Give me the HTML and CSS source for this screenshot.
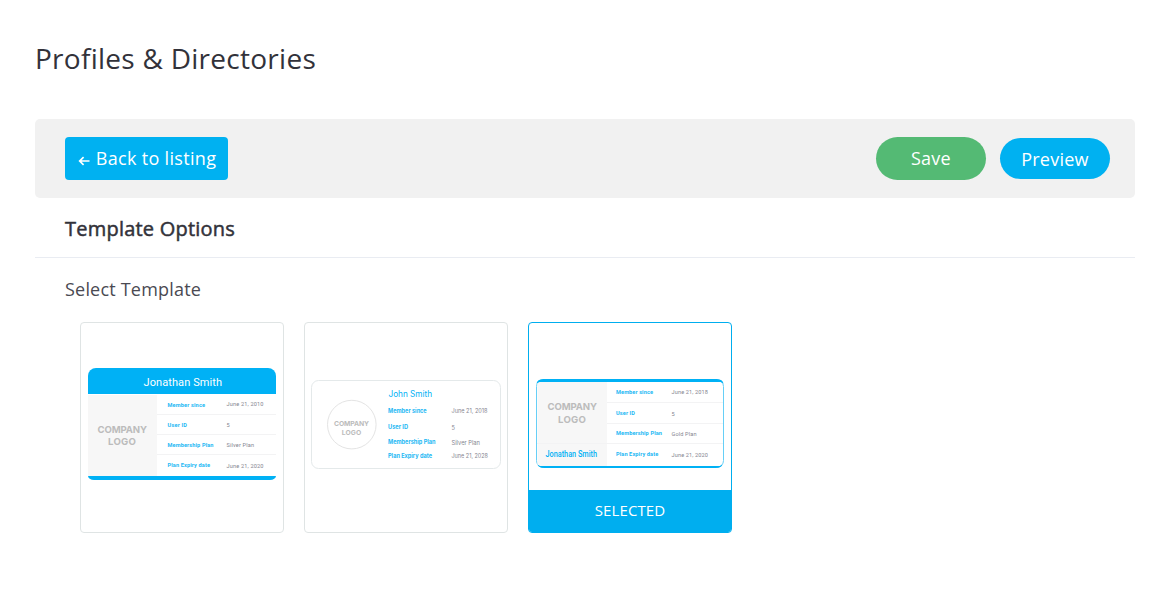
FILE: index.html
```html
<!DOCTYPE html>
<html lang="en">
<head>
<meta charset="utf-8">
<title>Profiles &amp; Directories</title>
<link rel="stylesheet" href="styles.css">
</head>
<body>
<main class="page">
  <h1 class="page-title">Profiles &amp; Directories</h1>
  <div class="toolbar">
    <a class="btn btn-back"><svg class="arrow" viewBox="0 0 12 10"><path d="M11.5 5H2M5.6 1.2L1.7 5l3.9 3.8"/></svg><span>Back to listing</span></a>
    <div class="actions">
      <button class="btn btn-save">Save</button>
      <button class="btn btn-preview">Preview</button>
    </div>
  </div>
  <h2 class="section-title">Template Options</h2>
  <p class="field-label">Select Template</p>
  <div class="templates">
    <div class="template">
      <svg class="art" viewBox="81 323 202 209">
        <path class="blue" d="M88 394V376a8 8 0 0 1 8-8H268a8 8 0 0 1 8 8V394z"/>
        <path class="panel" d="M88 395h69v81H88z"/>
        <path class="rule" d="M157 414.500H276M157 434.500H276M157 454.500H276"/>
        <path class="blue" d="M88 476H276a6 4 0 0 1-6 4H94a6 4 0 0 1-6-4z"/>
        <text class="name light" x="143.500" y="385.500" textLength="78.500">Jonathan Smith</text>
        <text class="logo" x="97.500" y="433" textLength="49.500">COMPANY</text>
        <text class="logo" x="108" y="445" textLength="28">LOGO</text>
        <g class="key">
          <text x="167.500" y="406.500" textLength="37.500">Member since</text>
          <text x="167.500" y="427" textLength="19.500">User ID</text>
          <text x="167.500" y="446.500" textLength="46">Membership Plan</text>
          <text x="167.500" y="467" textLength="42.500">Plan Expiry date</text>
        </g>
        <g class="value">
          <text x="226.500" y="406" textLength="37">June 21, 2010</text>
          <text x="226.500" y="427">5</text>
          <text x="226.500" y="447" textLength="27.500">Silver Plan</text>
          <text x="226.500" y="467.500" textLength="37">June 21, 2020</text>
        </g>
      </svg>
    </div>
    <div class="template">
      <svg class="art" viewBox="305 323 202 209">
        <rect class="outline" x="311.500" y="380.500" width="189" height="88" rx="7"/>
        <circle class="outline ring" cx="351.800" cy="424.600" r="24.300"/>
        <text class="logo small" x="334" y="426.200" textLength="35">COMPANY</text>
        <text class="logo small" x="341.800" y="434.800" textLength="19.500">LOGO</text>
        <text class="name round" x="388.500" y="397.300" textLength="43.500" lengthAdjust="spacingAndGlyphs">John Smith</text>
        <g class="key round">
          <text x="388" y="413" textLength="38.700" lengthAdjust="spacingAndGlyphs">Member since</text>
          <text x="388" y="429.200" textLength="20" lengthAdjust="spacingAndGlyphs">User ID</text>
          <text x="388" y="444.300" textLength="47.500" lengthAdjust="spacingAndGlyphs">Membership Plan</text>
          <text x="388" y="458.200" textLength="44" lengthAdjust="spacingAndGlyphs">Plan Expiry date</text>
        </g>
        <g class="value round">
          <text x="451.500" y="412.600" textLength="36" lengthAdjust="spacingAndGlyphs">June 21, 2018</text>
          <text x="451.500" y="430">5</text>
          <text x="451.500" y="445" textLength="28.500" lengthAdjust="spacingAndGlyphs">Silver Plan</text>
          <text x="451.500" y="458.200" textLength="36.500" lengthAdjust="spacingAndGlyphs">June 21, 2028</text>
        </g>
      </svg>
    </div>
    <div class="template selected">
      <svg class="art" viewBox="529 323 202 209">
        <rect class="frame" x="536.500" y="379.500" width="187" height="88" rx="7"/>
        <path class="panel" d="M537.500 382H607v84H537.500z"/>
        <path class="rule" d="M607 402.500H723M607 423.500H723M537 443.500H723"/>
        <path class="blue" d="M536.500 383.500a8 5 0 0 1 7-4.500H716.500a8 5 0 0 1 7 4.500l-3-1.500H539.500z"/>
        <path class="blue" d="M537.500 464.500l2.500 1.500H720l2.500-1.500a8 4 0 0 1-7 3.500H544.500a8 4 0 0 1-7-3.500z"/>
        <text class="logo" x="547.500" y="410.200" textLength="49.500">COMPANY</text>
        <text class="logo" x="558" y="422.500" textLength="28">LOGO</text>
        <text class="name member" x="545.500" y="456.800" textLength="51.500" lengthAdjust="spacingAndGlyphs">Jonathan Smith</text>
        <g class="key">
          <text x="616" y="394.300" textLength="37">Member since</text>
          <text x="616" y="415.300" textLength="19">User ID</text>
          <text x="616" y="435.300" textLength="46">Membership Plan</text>
          <text x="616" y="456" textLength="42.200">Plan Expiry date</text>
        </g>
        <g class="value">
          <text x="671.500" y="394" textLength="36.500">June 21, 2018</text>
          <text x="671.500" y="415.500">5</text>
          <text x="671.500" y="436" textLength="25">Gold Plan</text>
          <text x="671.500" y="457" textLength="36.500">June 21, 2020</text>
        </g>
      </svg>
      <div class="badge">SELECTED</div>
    </div>
  </div>
</main>
</body>
</html>
```
FILE: styles.css
```css
* { box-sizing: border-box; }
body { margin: 0; background: #fff; color: #32323a; font-family: "Open Sans", sans-serif; }
.page { padding: 38px 29px 0 35px; }
.page-title { margin: 0 0 41px; font-size: 28px; line-height: 40px; font-weight: 400; letter-spacing: 0.27px; }
.toolbar { display: flex; justify-content: space-between; align-items: center; height: 79px; padding: 0 25px 0 30px; background: #f1f1f1; border-radius: 5px; }
.btn { display: flex; align-items: center; justify-content: center; border: 0; padding: 0; color: #fff; background: #00b1f1; font: 500 18px "Open Sans", sans-serif; letter-spacing: 0.25px; }
.btn-back { width: 163px; height: 43px; padding: 0 0 2px 1px; border-radius: 4px; gap: 6px; letter-spacing: 0.32px; }
.arrow { width: 12px; height: 10px; margin-top: 6px; fill: none; stroke: #fff; stroke-width: 1.7; }
.actions { display: flex; align-items: center; gap: 14px; }
.btn-save { width: 110px; height: 43px; padding-bottom: 2px; border-radius: 22px; background: #54ba74; }
.btn-preview { width: 110px; height: 41px; border-radius: 21px; }
.section-title { margin: 0; height: 60px; padding: 17px 30px 0; border-bottom: 1px solid #e9ecf2; font-size: 20px; line-height: 28px; font-weight: 500; letter-spacing: 0.22px; -webkit-text-stroke: 0.5px #32323a; }
.field-label { margin: 0; padding: 18px 30px 0; height: 64px; font-size: 18px; line-height: 26px; letter-spacing: 0.2px; color: #4a4a52; }
.templates { display: flex; gap: 20px; padding-left: 45px; }
.template { position: relative; width: 204px; height: 211px; border: 1px solid #dfe4e4; border-radius: 4px; overflow: hidden; }
.template.selected { border-color: #00aeef; }
.art { display: block; width: 202px; height: 209px; }
.badge { position: absolute; left: 0; right: 0; bottom: 0; height: 42px; line-height: 40px; text-align: center; color: #fff; background: #00aeef; font-size: 15px; font-weight: 500; letter-spacing: 0.1px; }
.blue { fill: #00b1f5; }
.panel { fill: #f7f7f7; }
.rule { fill: none; stroke: #f3f3f4; }
.outline { fill: #fff; stroke: #e4e9ea; }
.ring { stroke: #e4e4e4; }
.frame { fill: #fff; stroke: #66cff7; }
.logo { font: 700 9.600px Inter, sans-serif; fill: #bcbcbc; }
.logo.small { font-size: 6.800px; }
.name { font: 400 11px Roboto, sans-serif; fill: #00b1f5; }
.name.light { fill: #fff; }
.name.round { font: 400 8.300px Inter, sans-serif; }
.name.member { font-size: 8.200px; font-weight: 500; }
.key { font: 700 5.600px Roboto, sans-serif; fill: #1db8f4; }
.value { font: 400 5.600px Roboto, sans-serif; fill: #85858f; }
.key.round, .value.round { font-family: Inter, sans-serif; font-size: 5.600px; }
```
